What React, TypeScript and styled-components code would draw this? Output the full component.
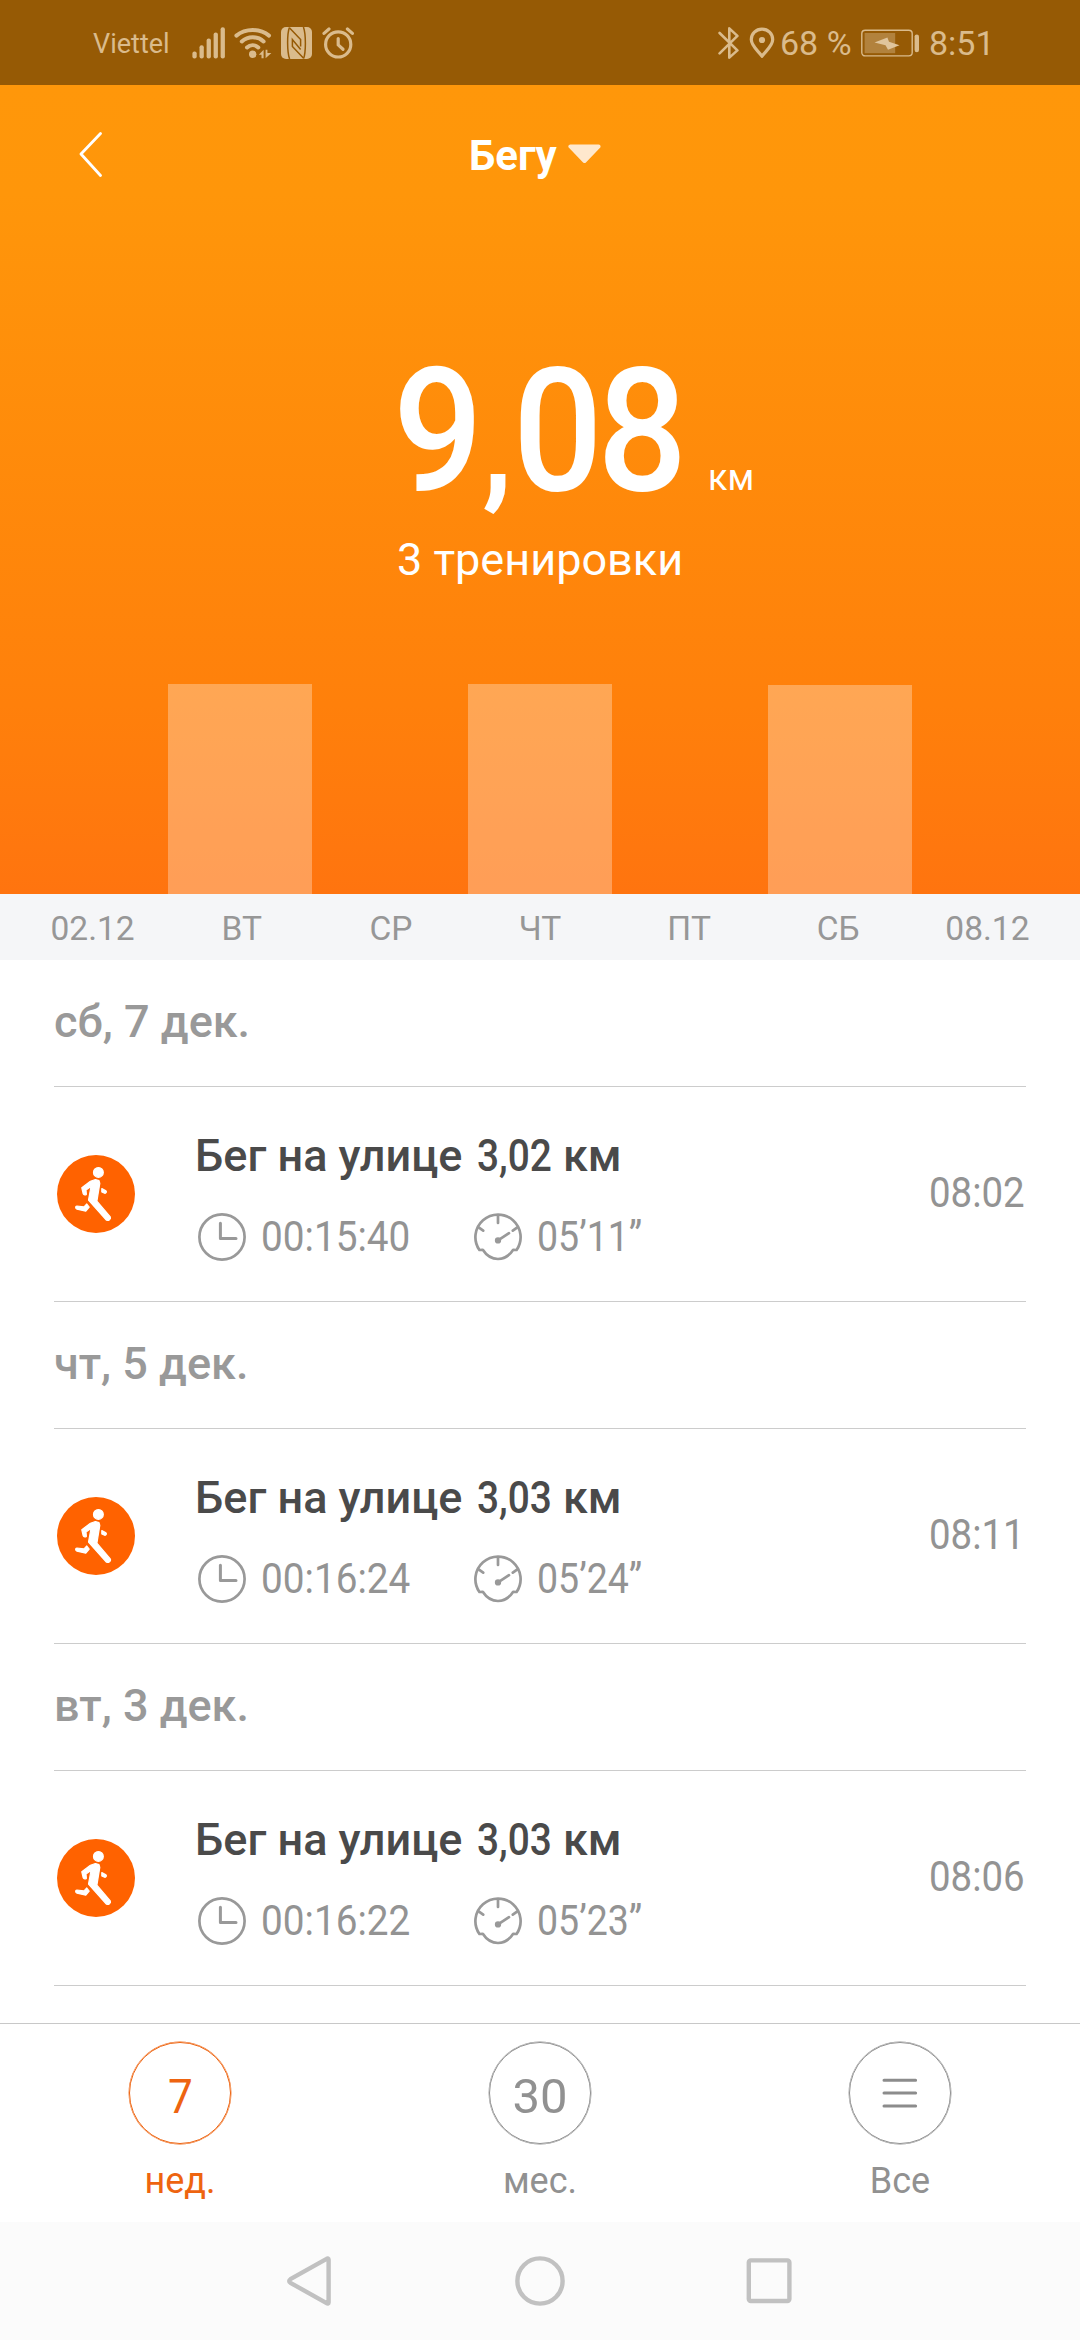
import React from 'react';
import styled, { createGlobalStyle } from 'styled-components';

const GlobalStyle = createGlobalStyle`
  *, *::before, *::after { box-sizing: border-box; }
  body {
    margin: 0;
    background: #fff;
    font-family: Roboto, 'Noto Sans', 'Liberation Sans', sans-serif;
  }
  svg { display: block; flex: none; }
`;

const ink = '#dabb8c';
const accent = '#ee6410';

const Screen = styled.div`
  width: 1080px;
  height: 2340px;
  display: flex;
  flex-direction: column;
  overflow: hidden;
  background: #fff;
`;

/* Text drawn with a narrower face than the installed one: width is the laid-out width. */
const Narrow = styled.span<{ $width: number; $scale: number }>`
  display: inline-block;
  width: ${(p) => p.$width}px;
  white-space: nowrap;
  transform: scaleX(${(p) => p.$scale});
  transform-origin: 0 50%;
`;

/* ---------- status bar ---------- */

const StatusBar = styled.div`
  height: 85px;
  flex: none;
  display: flex;
  align-items: center;
  justify-content: space-between;
  padding: 1px 91px 0 93px;
  background: #965a05;
  color: ${ink};
`;

const StatusGroup = styled.div`
  display: flex;
  align-items: center;
`;

const Carrier = styled.span`
  width: 99px;
  font-size: 27px;
  line-height: 40px;
  padding-top: 1px;
`;

const StatusText = styled.span<{ $width: number }>`
  width: ${(p) => p.$width}px;
  font-size: 34px;
  line-height: 42px;
  white-space: nowrap;
`;

const IconSlot = styled.span<{ $gap: number }>`
  margin-right: ${(p) => p.$gap}px;
`;

/* ---------- header ---------- */

const Header = styled.header`
  height: 809px;
  flex: none;
  display: flex;
  flex-direction: column;
  background: linear-gradient(180deg, #ff970a 0, #ff960a 110px, #ff800b 620px, #ff740f 809px);
  color: #fff;
`;

const TitleBar = styled.div`
  height: 140px;
  display: flex;
  align-items: center;
  padding-left: 79px;
`;

const TitleButton = styled.div`
  display: flex;
  align-items: center;
  gap: 11px;
  margin-left: 366px;
  font-size: 42px;
  font-weight: 700;
  line-height: 60px;
`;

const TitleText = styled.span`
  padding-top: 2px;
`;

const Summary = styled.div`
  padding-top: 120px;
  height: 459px;
`;

const Total = styled.div`
  display: flex;
  align-items: baseline;
  height: 172px;
  padding-left: 393px;
`;

const TotalValue = styled.span`
  display: inline-block;
  width: 315px;
  font-size: 173px;
  line-height: 172px;
  font-weight: 500;
  letter-spacing: -6px;
  white-space: nowrap;
  transform: scaleX(0.915);
  transform-origin: 0 50%;
`;

const Comma = styled.span`
  margin-left: 5px;
  font-size: 136px;
  font-weight: 700;
  letter-spacing: 0;
`;

const Unit = styled.span`
  font-size: 36px;
  line-height: 40px;
`;

const Workouts = styled.div`
  margin-top: 13px;
  font-size: 45px;
  line-height: 60px;
  padding-left: 397px;
`;

const Bars = styled.div`
  flex: 1;
  display: flex;
  align-items: flex-end;
  gap: 6px;
  padding: 0 18px;
`;

const Bar = styled.div`
  flex: 1;
  background: rgba(255, 255, 255, 0.3);
`;

const Days = styled.div`
  height: 66px;
  flex: none;
  display: flex;
  padding: 2px 18px 0;
  background: #f5f6f8;
`;

const Day = styled.span`
  flex: 1;
  text-align: center;
  font-size: 33.5px;
  line-height: 66px;
  color: #979797;
`;

/* ---------- list ---------- */

const List = styled.main`
  height: 1063px;
  flex: none;
  padding: 0 54px;
`;

const DateTitle = styled.h2`
  margin: 0;
  height: 127px;
  border-bottom: 1px solid #ccc;
  font-size: 45px;
  font-weight: 500;
  line-height: 123px;
  color: #999;
`;

const Row = styled.div`
  height: 215px;
  display: flex;
  align-items: center;
  padding-left: 3px;
  border-bottom: 1px solid #ccc;
`;

const RowBody = styled.div`
  flex: 1;
  height: 100%;
  padding: 39px 0 0 60px;
`;

const RowTitle = styled.div`
  display: flex;
  font-size: 45px;
  font-weight: 500;
  line-height: 60px;
  color: #4a4a4a;
  white-space: nowrap;
`;

const Metrics = styled.div`
  display: flex;
  align-items: center;
  margin: 26px 0 0 3px;
  font-size: 42px;
  line-height: 50px;
  color: #939393;
`;

const MetricIcon = styled.span`
  width: 62.5px;
`;

const StartTime = styled.div`
  width: 97px;
  padding-bottom: 3px;
  font-size: 42px;
  line-height: 50px;
  color: #939393;
`;

const Phrase = styled.span`
  width: 282px;
`;

/* ---------- tabs ---------- */

const Tabs = styled.nav`
  height: 199px;
  flex: none;
  display: flex;
  border-top: 1px solid #c8c8c8;
`;

const Tab = styled.div<{ $active?: boolean }>`
  flex: 1;
  display: flex;
  flex-direction: column;
  align-items: center;
  padding-top: 18px;
  color: ${(p) => (p.$active ? accent : '#919191')};
`;

const TabCircle = styled.div<{ $drop?: number }>`
  width: 102px;
  height: 102px;
  display: flex;
  align-items: center;
  justify-content: center;
  padding-top: ${(p) => p.$drop ?? 0}px;
  border: 1px solid currentColor;
  box-shadow: 0 0 0 0.4px currentColor;
  border-radius: 50%;
  font-size: 49px;
  line-height: 60px;
`;

const TabLabel = styled.span`
  margin-top: 13px;
  font-size: 36px;
  line-height: 48px;
`;

const SystemNav = styled.div`
  height: 118px;
  flex: none;
  display: flex;
  align-items: center;
  justify-content: center;
  gap: 180px;
  background: #fbfbfb;
`;

/* ---------- icons ---------- */

const SignalIcon = () => (
  <svg width="33" height="32" viewBox="0 0 33 32" fill={ink}>
    <rect x="0.4" y="24.5" width="4.3" height="7" rx="2" />
    <rect x="7.5" y="18.2" width="4.3" height="13.3" rx="2" />
    <rect x="14.6" y="11.5" width="4.3" height="20" rx="2" />
    <rect x="21.6" y="5.4" width="4.3" height="26.1" rx="2" />
    <rect x="28.6" y="0.2" width="4.3" height="31.3" rx="2" />
  </svg>
);

const WifiIcon = () => (
  <svg width="38" height="32" viewBox="0 0 38 32">
    <g fill="none" stroke={ink} strokeWidth="4" strokeLinecap="round">
      <path d="M2.4 8.6C11.5 1.2 26 1.2 35 8.6" />
      <path d="M7.8 14.5C14 8.9 23.5 8.9 29.6 14.5" />
      <path d="M13 20.5C16.3 17.4 21 17.4 24.3 20.5" />
    </g>
    <circle cx="18.7" cy="27.3" r="3.7" fill={ink} />
    <path d="M24.8 27.8L29.6 22.8V31.2H27.5V27.8ZM31.6 31.2V22.8H33.4V26H37.4Z" fill={ink} />
  </svg>
);

const NfcIcon = () => (
  <svg width="31" height="32" viewBox="0 0 31 32">
    <rect width="31" height="32" rx="5" fill={ink} />
    <g fill="none" stroke="#965a05" strokeWidth="1.5">
      <path d="M8.4 0.5C6 7 6 25 8.6 32" />
      <path d="M22.4 0C25 7 25 25 22.6 31.5" />
      <path d="M8.4 0.8L19.6 12.6V19.5" />
      <path d="M22.6 31.2L11.4 19.4V12.5L19.6 22.5" />
    </g>
  </svg>
);

const AlarmIcon = () => (
  <svg width="33" height="32" viewBox="0 0 33 32" fill="none" stroke={ink} strokeWidth="3.2" strokeLinecap="round" strokeLinejoin="round">
    <circle cx="16.2" cy="17.4" r="12.6" />
    <path d="M16.2 11.5V17.9L21 22.3" />
    <path d="M2 6.4L7 2M25.4 2L30.4 6.4" />
  </svg>
);

const BluetoothIcon = () => (
  <svg width="22" height="32" viewBox="0 0 22 32" fill="none" stroke={ink} strokeWidth="2.6" strokeLinecap="round" strokeLinejoin="round">
    <path d="M1.6 6L19.4 23.4L11.3 30.6V1.4L19.4 8.9L1.6 26.4" />
  </svg>
);

const PinIcon = () => (
  <svg width="26" height="32" viewBox="0 0 26 32">
    <path
      d="M13 29.3C10.4 24.8 2.3 19.6 2.3 12.6C2.3 6.6 7 2.2 13 2.2S23.7 6.6 23.7 12.6C23.7 19.6 15.6 24.8 13 29.3Z"
      fill="none"
      stroke={ink}
      strokeWidth="3.2"
      strokeLinejoin="round"
    />
    <circle cx="13" cy="13" r="3.1" fill={ink} />
  </svg>
);

const BatteryIcon = () => (
  <svg width="60" height="28" viewBox="0 0 60 28">
    <rect x="1.8" y="1.3" width="50.4" height="25.6" rx="3.4" fill="none" stroke={ink} strokeWidth="1.4" />
    <rect x="4.6" y="4" width="30.6" height="20.2" fill={ink} opacity="0.42" />
    <path d="M14.5 13.4L27.4 8.5L29 12.8L39.5 16.2L28 20.8L25.5 16.2Z" fill="#e0c59c" />
    <rect x="54.6" y="5.4" width="4.4" height="17.8" rx="2.2" fill={ink} />
  </svg>
);

const BackIcon = () => (
  <svg width="24" height="46" viewBox="0 0 24 46" fill="none" stroke="#fff" strokeWidth="2.8" strokeLinecap="round" strokeLinejoin="round">
    <path d="M21.5 1.5L2 22L21.5 43.5" />
  </svg>
);

const CaretIcon = () => (
  <svg width="33" height="23" viewBox="0 0 33 23">
    <path d="M2.4 2.4H30.6L16.5 17Z" fill="#ffe8cd" stroke="#ffe8cd" strokeWidth="4" strokeLinejoin="round" />
  </svg>
);

const RunIcon = () => (
  <svg width="78" height="78" viewBox="0 0 78 78">
    <circle cx="39" cy="39" r="39" fill="#ff6200" />
    <g fill="#fff" stroke="#fff" strokeWidth="1.2" strokeLinejoin="round">
      <circle cx="41.4" cy="17.4" r="4.9" />
      <path d="M24.8 32.8L33.4 26.2L38.4 24.5L42 25.6L42.8 28.4L39.9 46.2L53.3 62C54.2 63.8 51.6 66.4 49.3 65L31.5 45L34 31.5L29 35L29.4 39.3C28.6 40.4 26.8 40.2 26.2 38.8Z" />
      <path d="M44.8 33.6L49 35.8C50 36.8 49 38.6 47.6 38.2L44.8 36.9Z" />
      <path d="M19.8 51L27 51.9L29.8 49L32.2 52.2L28.8 56.2L20 54.2C18 53.4 18.4 51 19.8 51Z" />
    </g>
  </svg>
);

const ClockIcon = () => (
  <svg width="48" height="48" viewBox="0 0 48 48" fill="none" stroke="#999" strokeWidth="2.7" strokeLinecap="round" strokeLinejoin="round">
    <circle cx="24" cy="24" r="22.6" />
    <path d="M22.4 10.3V25.6H38" strokeWidth="3" />
  </svg>
);

const PaceIcon = () => (
  <svg width="48" height="48" viewBox="0 0 48 48" fill="none" stroke="#999" strokeWidth="2.7" strokeLinecap="round" strokeLinejoin="round">
    <path d="M5.4 37A22.6 22.6 0 1 1 42.6 37L39.2 36.8C35.5 42.6 30 46 24 46S12.5 42.6 8.8 36.8Z" />
    <path d="M24 2.5V10M5 14.6L9.2 17.6M43 14.6L38.8 17.6" />
    <path d="M24 27.4L35 20.2" />
    <circle cx="24" cy="27.4" r="1.8" fill="#999" />
  </svg>
);

const MenuIcon = () => (
  <svg width="36" height="30" viewBox="0 0 36 30" stroke="#8c8c8c" strokeWidth="3" strokeLinecap="round">
    <path d="M2 2.2H33.6M2 15.1H33.6M2 28H33.6" />
  </svg>
);

const NavBack = () => (
  <svg width="50" height="50" viewBox="0 0 50 50" fill="none" stroke="#c1c1c1" strokeWidth="4.4" strokeLinejoin="round">
    <path d="M41.6 2.8C42.8 2 43.6 2.4 43.6 3.6V46.4C43.6 47.6 42.8 48 41.6 47.2L5.4 26.8C3.8 25.7 3.8 24.3 5.4 23.2Z" />
  </svg>
);

const NavHome = () => (
  <svg width="50" height="50" viewBox="0 0 50 50" fill="none" stroke="#c1c1c1" strokeWidth="4.4">
    <circle cx="25" cy="25" r="22.6" />
  </svg>
);

const NavRecent = () => (
  <svg width="50" height="50" viewBox="0 0 50 50" fill="none" stroke="#c1c1c1" strokeWidth="4.4">
    <rect x="3.8" y="4.4" width="40.6" height="40.6" rx="2" />
  </svg>
);

/* ---------- data ---------- */

const days = [
  { label: '02.12', height: 0 },
  { label: 'ВТ', height: 210 },
  { label: 'СР', height: 0 },
  { label: 'ЧТ', height: 210 },
  { label: 'ПТ', height: 0 },
  { label: 'СБ', height: 209.4 },
  { label: '08.12', height: 0 },
];

const workouts = [
  { date: 'сб, 7 дек.', distance: '3,02', duration: '00:15:40', pace: '05’11”', start: '08:02' },
  { date: 'чт, 5 дек.', distance: '3,03', duration: '00:16:24', pace: '05’24”', start: '08:11' },
  { date: 'вт, 3 дек.', distance: '3,03', duration: '00:16:22', pace: '05’23”', start: '08:06' },
];

export default function App() {
  return (
    <Screen>
      <GlobalStyle />
      <StatusBar>
        <StatusGroup>
          <Carrier>Viettel</Carrier>
          <IconSlot $gap={9}><SignalIcon /></IconSlot>
          <IconSlot $gap={9}><WifiIcon /></IconSlot>
          <IconSlot $gap={10}><NfcIcon /></IconSlot>
          <AlarmIcon />
        </StatusGroup>
        <StatusGroup>
          <IconSlot $gap={9}><BluetoothIcon /></IconSlot>
          <IconSlot $gap={5}><PinIcon /></IconSlot>
          <StatusText $width={80}>68 %</StatusText>
          <IconSlot $gap={9}><BatteryIcon /></IconSlot>
          <StatusText $width={60}>8:51</StatusText>
        </StatusGroup>
      </StatusBar>

      <Header>
        <TitleBar>
          <BackIcon />
          <TitleButton>
            <TitleText>Бегу</TitleText>
            <CaretIcon />
          </TitleButton>
        </TitleBar>
        <Summary>
          <Total>
            <TotalValue>9<Comma>,</Comma>08</TotalValue>
            <Unit>км</Unit>
          </Total>
          <Workouts>3 тренировки</Workouts>
        </Summary>
        <Bars>
          {days.map((d) => (
            <Bar key={d.label} style={{ height: d.height }} />
          ))}
        </Bars>
      </Header>
      <Days>
        {days.map((d) => (
          <Day key={d.label}>{d.label}</Day>
        ))}
      </Days>

      <List>
        {workouts.map((w) => (
          <section key={w.date}>
            <DateTitle>{w.date}</DateTitle>
            <Row>
              <RunIcon />
              <RowBody>
                <RowTitle>
                  <Phrase>Бег на улице</Phrase>
                  <Narrow $width={86} $scale={0.862}>{w.distance}</Narrow>
                  <span>км</span>
                </RowTitle>
                <Metrics>
                  <MetricIcon><ClockIcon /></MetricIcon>
                  <Narrow $width={213.5} $scale={0.922}>{w.duration}</Narrow>
                  <MetricIcon><PaceIcon /></MetricIcon>
                  <Narrow $width={106} $scale={0.893}>{w.pace}</Narrow>
                </Metrics>
              </RowBody>
              <StartTime>
                <Narrow $width={97} $scale={0.915}>{w.start}</Narrow>
              </StartTime>
            </Row>
          </section>
        ))}
      </List>

      <Tabs>
        <Tab $active>
          <TabCircle $drop={7}>
            <Narrow $width={25} $scale={0.9}>7</Narrow>
          </TabCircle>
          <TabLabel>нед.</TabLabel>
        </Tab>
        <Tab>
          <TabCircle $drop={7}>30</TabCircle>
          <TabLabel>мес.</TabLabel>
        </Tab>
        <Tab>
          <TabCircle><MenuIcon /></TabCircle>
          <TabLabel>Все</TabLabel>
        </Tab>
      </Tabs>

      <SystemNav>
        <NavBack />
        <NavHome />
        <NavRecent />
      </SystemNav>
    </Screen>
  );
}
